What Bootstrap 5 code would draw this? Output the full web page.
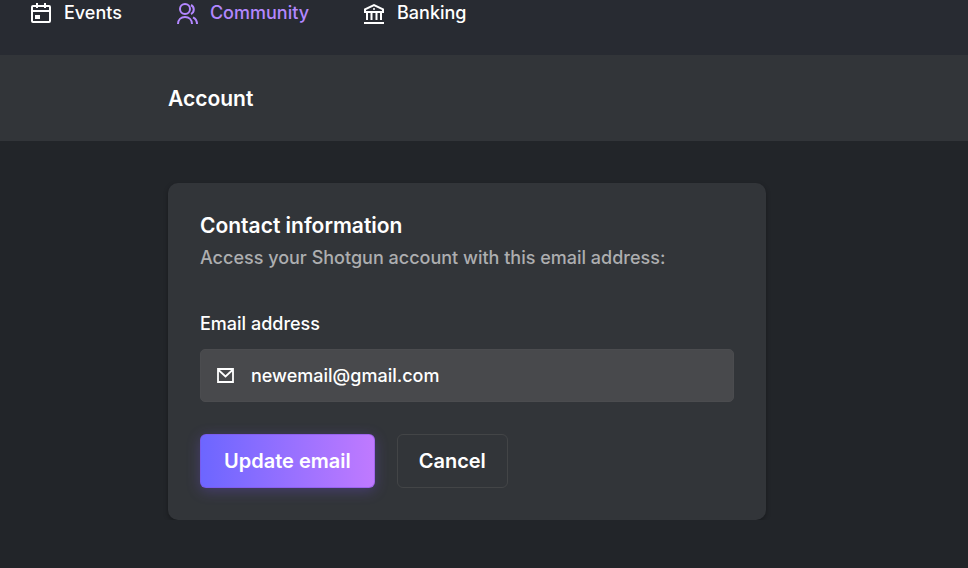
<!DOCTYPE html>
<html lang="en">
<head>
<meta charset="utf-8">
<meta name="viewport" content="width=device-width, initial-scale=1">
<title>Account</title>
<link href="https://cdn.jsdelivr.net/npm/bootstrap@5.3.0/dist/css/bootstrap.min.css" rel="stylesheet">
<style>
  body { background: #222529; color: #fff; font-family: Inter, "Liberation Sans", sans-serif; font-size: 18px; font-weight: 450; line-height: 26px; }
  .top-nav { background: #282b32; padding: 0 30px 29px; gap: 54px; }
  .top-link { color: #fff; gap: 12px; }
  .top-link.current { color: #b387ff; }
  .page-head { background: #323539; padding: 31px 0 29px; }
  .page-wrap { max-width: 632px; }
  .page-title, .panel-title { font-size: 21px; line-height: 26px; font-weight: 560; }
  .panel { max-width: 598px; background: #323539; border-radius: 10px; padding: 30px 32px 32px; margin-top: 42px; box-shadow: 0 2px 5px rgba(0,0,0,.3); }
  .panel-note { color: #adaeb0; font-weight: 500; margin: 6px 0 40px; }
  .field-label { font-weight: 500; margin-bottom: 12px; }
  .field { background: #48494c; border: 1px solid #4b4c4f; border-radius: 5px; padding: 0 16px; gap: 16px; }
  .field input, .field input:focus { background: transparent; color: #fff; border: 0; padding: 13px 0 12px; font-size: 18px; font-weight: 450; line-height: 26px; box-shadow: none; }
  .actions { margin-top: 32px; gap: 22px; }
  .action-btn, .action-btn:hover { color: #fff; font-size: 20px; line-height: 26px; font-weight: 600; padding: 13px 21px; border-radius: 6px; }
  .action-main, .action-main:hover { padding: 13px 23px; background: linear-gradient(90deg, #6c66ff, #c07aff) border-box; border-color: rgba(130,80,220,.5); box-shadow: 0 3px 14px rgba(125,85,255,.28); }
  .action-plain, .action-plain:hover { border-color: #434547; }
</style>
<script src="https://cdn.jsdelivr.net/npm/bootstrap@5.3.0/dist/js/bootstrap.bundle.min.js" defer></script>
</head>
<body>
<nav class="top-nav d-flex" aria-label="Main">
  <a href="#" class="top-link d-flex align-items-center text-decoration-none">
    <svg width="22" height="22" viewBox="0 0 22 22" fill="none" stroke="currentColor" stroke-width="2" aria-hidden="true">
      <rect x="2" y="4" width="18" height="16" rx="1"/><path d="M2 9H20M7 1V6M15 1V6"/><path d="M5 13H10V17H5Z" fill="currentColor" stroke="none"/>
    </svg>Events</a>
  <a href="#" class="top-link current d-flex align-items-center text-decoration-none" aria-current="page">
    <svg width="22" height="22" viewBox="0 0 22 22" fill="none" stroke="currentColor" stroke-width="2" aria-hidden="true">
      <circle cx="9" cy="7" r="5"/><path d="M2 22C2 17.700 5 15 9 15S16 17.700 16 22M15 3C18.700 5 18.700 10 15 12M17 15.300C19.700 16.700 21 19 21 22"/>
    </svg>Community</a>
  <a href="#" class="top-link d-flex align-items-center text-decoration-none">
    <svg width="22" height="22" viewBox="0 0 22 22" fill="none" stroke="currentColor" stroke-width="2" aria-hidden="true">
      <path d="M1 21H21M2 10V7.300L11 3.200L20 7.300V10ZM4 11V18M8.500 11V18M13.500 11V18M18 11V18"/><circle cx="11" cy="7" r="1" fill="currentColor" stroke="none"/>
    </svg>Banking</a>
</nav>
<header class="page-head">
  <div class="page-wrap mx-auto"><h1 class="page-title mb-0">Account</h1></div>
</header>
<main class="page-wrap mx-auto">
  <section class="panel">
    <h2 class="panel-title mb-0">Contact information</h2>
    <p class="panel-note">Access your Shotgun account with this email address:</p>
    <form>
      <label class="field-label d-block" for="email">Email address</label>
      <div class="field d-flex align-items-center">
        <svg class="flex-shrink-0" width="18" height="18" viewBox="0 0 18 18" fill="none" stroke="currentColor" stroke-width="1.800" aria-hidden="true"><path d="M1 2H16V15H1ZM1.500 3L8.500 9.500L15.500 3"/></svg>
        <input class="form-control" type="email" id="email" value="newemail@gmail.com">
      </div>
      <div class="actions d-flex">
        <button type="button" class="btn action-btn action-main">Update email</button>
        <button type="button" class="btn action-btn action-plain">Cancel</button>
      </div>
    </form>
  </section>
</main>
</body>
</html>
